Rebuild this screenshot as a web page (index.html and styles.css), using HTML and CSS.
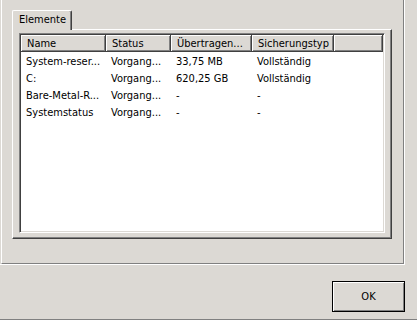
FILE: index.html
```html
<!DOCTYPE html>
<html>
<head>
<meta charset="utf-8">
<link rel="stylesheet" href="styles.css">
</head>
<body>
<div class="frame">
  <div class="frame-in">
    <div class="tabctl">
      <div class="tabstrip"><div class="tab">Elemente</div></div>
      <div class="page">
        <div class="listview">
          <div class="header">
            <div class="hcell c1">Name</div>
            <div class="hcell c2">Status</div>
            <div class="hcell c3">Übertragen...</div>
            <div class="hcell c4">Sicherungstyp</div>
            <div class="hcell c5"></div>
          </div>
          <div class="rows">
            <div class="row"><div class="cell c1">System-reser...</div><div class="cell c2">Vorgang...</div><div class="cell c3">33,75 MB</div><div class="cell c4">Vollständig</div></div>
            <div class="row"><div class="cell c1">C:</div><div class="cell c2">Vorgang...</div><div class="cell c3">620,25 GB</div><div class="cell c4">Vollständig</div></div>
            <div class="row"><div class="cell c1">Bare-Metal-R...</div><div class="cell c2">Vorgang...</div><div class="cell c3">-</div><div class="cell c4">-</div></div>
            <div class="row"><div class="cell c1">Systemstatus</div><div class="cell c2">Vorgang...</div><div class="cell c3">-</div><div class="cell c4">-</div></div>
          </div>
        </div>
      </div>
    </div>
  </div>
</div>
<div class="footer">
  <div class="btn">OK</div>
</div>
<div class="bottomline"></div>
</body>
</html>
```

FILE: styles.css
```css
html, body {
  margin: 0;
  padding: 0;
}
body {
  width: 417px;
  height: 321px;
  overflow: hidden;
  background: #dcd9d4;
  font-family: "DejaVu Sans Condensed", "DejaVu Sans", sans-serif;
  font-stretch: condensed;
  font-size: 11px;
  color: #000;
}
.frame {
  width: 405px;
  height: 265px;
  box-sizing: border-box;
  padding-left: 1px;
  border-right: 1px solid #fff;
  border-bottom: 1px solid #fff;
}
.frame-in {
  height: 100%;
  box-sizing: border-box;
  border-left: 1px solid #fff;
  border-right: 1px solid #808080;
  border-bottom: 1px solid #808080;
  padding: 10px 0 0 10px;
}
.tabctl {
  width: 380px;
}
.tabstrip {
  display: flex;
  height: 19px;
}
.tab {
  position: relative;
  z-index: 1;
  width: 60px;
  height: 20px;
  box-sizing: border-box;
  background: #dcd9d4;
  border-top: 1px solid #fff;
  border-left: 1px solid #fff;
  border-right: 1px solid #404040;
  border-radius: 2px 2px 0 0;
  box-shadow: inset -1px 0 #808080;
  padding-left: 6px;
  line-height: 17px;
}
.page {
  height: 210px;
  box-sizing: border-box;
  border-top: 1px solid #fff;
  border-left: 1px solid #fff;
  border-right: 1px solid #404040;
  border-bottom: 1px solid #404040;
  box-shadow: inset -1px -1px #808080;
  padding: 3px 0 0 6px;
}
.listview {
  width: 366px;
  height: 200px;
  box-sizing: border-box;
  background: #fff;
  border: 1px solid;
  border-color: #808080 #fff #fff #808080;
  box-shadow: inset 1px 1px #404040, inset -1px -1px #dcd9d4;
  padding: 1px;
}
.header {
  display: flex;
  height: 17px;
}
.hcell {
  box-sizing: border-box;
  height: 17px;
  background: #dcd9d4;
  border-right: 1px solid #404040;
  border-bottom: 1px solid #404040;
  box-shadow: inset 1px 1px #fff, inset -1px -1px #808080;
  padding: 2px 0 0 6px;
  line-height: 14px;
  white-space: nowrap;
  overflow: hidden;
}
.c1 { width: 85px; }
.c2 { width: 65px; }
.c3 { width: 81px; }
.c4 { width: 82px; }
.c5 { flex: 1; }
.rows {
  padding-top: 1px;
}
.row {
  display: flex;
  height: 17px;
  line-height: 17px;
}
.cell {
  box-sizing: border-box;
  padding-left: 5px;
  white-space: nowrap;
  overflow: hidden;
}
.footer {
  display: flex;
  padding: 16px 0 0 332px;
  height: 31px;
}
.btn {
  width: 73px;
  height: 31px;
  box-sizing: border-box;
  border: 1px solid #000;
  box-shadow: inset 1px 1px #fff, inset -1px -1px #808080;
  display: flex;
  align-items: center;
  justify-content: center;
}
.bottomline {
  margin-top: 7px;
  height: 0;
  border-top: 1px solid #808080;
  border-bottom: 1px solid #fff;
}
```
